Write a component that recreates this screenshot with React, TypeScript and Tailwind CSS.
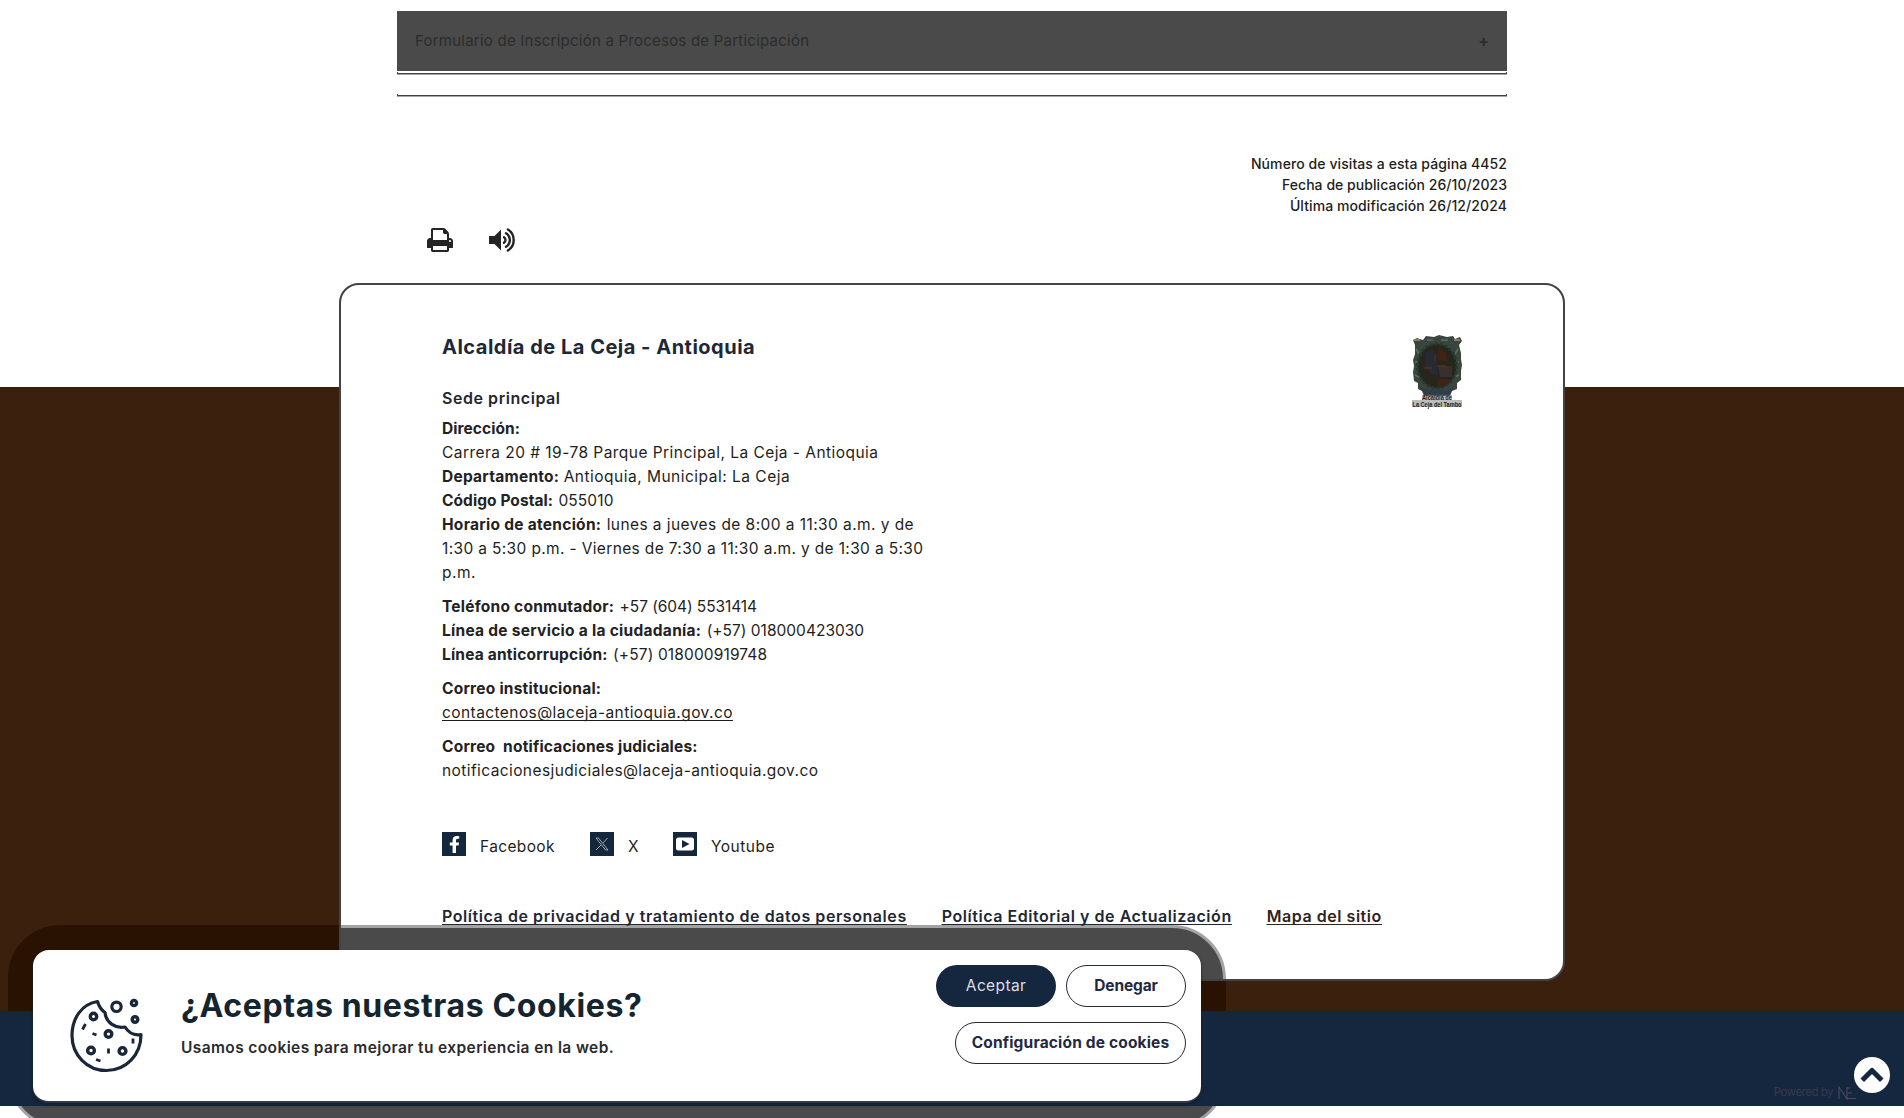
import type { ReactNode } from "react";
import { FaFacebookF } from "react-icons/fa";

const B = ({ c, children }: { c: string; children: ReactNode }) => (
  <b className={`font-bold text-[#222224] ${c}`}>{children}</b>
);

const PrintIcon = () => (
  <svg className="w-[26px] h-6" viewBox="0 0 1664 1536" preserveAspectRatio="none" fill="#242426">
    <path d="M384 1408h896v-256h-896v256zM384 768h896v-384h-160q-40 0-68-28t-28-68v-160h-640v640zM1536 832q0-26-19-45t-45-19-45 19-19 45 19 45 45 19 45-19 19-45zM1664 832v416q0 13-9.5 22.5t-22.5 9.5h-224v160q0 40-28 68t-68 28h-960q-40 0-68-28t-28-68v-160h-224q-13 0-22.5-9.5t-9.5-22.5v-416q0-79 56.5-135.5t135.5-56.5h64v-544q0-40 28-68t68-28h672q40 0 88 20t76 48l152 152q28 28 48 76t20 88v256h64q79 0 135.5 56.5t56.5 135.5z" />
  </svg>
);

const VolumeIcon = () => (
  <svg className="w-7 h-6 overflow-visible" viewBox="0 0 28 24" fill="none" stroke="#242426" strokeWidth="2.4" strokeLinecap="round">
    <path d="M0 8h5.500L12 1.500v21L5.500 16H0z" fill="#242426" stroke="none" />
    <path d="M15 9.200a3.400 3.400 0 0 1 0 5.600" />
    <path d="M17 5.200a8 8 0 0 1 0 13.600" />
    <path d="M18.900 1.500a12.400 12.400 0 0 1 0 21" />
  </svg>
);

const CookieIcon = () => (
  <svg className="w-[74px] h-[74px] shrink-0 overflow-visible" viewBox="0 0 74 74" fill="none" stroke="#1a2738" strokeWidth="3.200">
    <path d="M27.500 2.500C12 5 2 19 2 36.500 2 56 17 71.500 36.500 71.500S71 56 71 35.500c-6 1-12-1-16-7.500-9 2-19-4-20-14.500-3-2-6-6-7.500-11z" strokeLinejoin="round" />
    <circle cx="46.500" cy="7.800" r="4.700" strokeWidth="3.200" />
    <g strokeWidth="3.400">
      <circle cx="64" cy="4" r="2.600" />
      <circle cx="65" cy="20.500" r="2.800" />
      <circle cx="23.500" cy="17.500" r="3.200" />
      <circle cx="38.500" cy="35" r="3.300" />
      <circle cx="21" cy="51.500" r="3.400" />
      <circle cx="52.500" cy="52" r="3.400" />
      <path d="M15.500 25l-3 5.500M22.500 34.500l4 1.500M63 39.500v5M38.500 49.500v5M26 60.500l4.500 1.500" strokeWidth="2.800" />
    </g>
  </svg>
);

/* Municipal coat of arms with its two-line caption */
const Shield = () => (
  <svg className="w-[50px] h-[74px] overflow-visible" viewBox="0 0 50 74">
    <path d="M1 5l4-2 6 2 3-4 8 1 5-2 8 2 6-1 2 3 5-2 2 4-3 4 2 8v6l1 6-1 6v9l-4 3v6l-5 2-2 5H12l-2-5-4-2v-6l-4-2-1-9 1-6-1-6 2-6V10z" fill="#3b4540" />
    <path d="M2 5h6M42 5h6" stroke="#8c7a5c" strokeWidth="2" />
    <path d="M4 14l3 5M46 14l-3 5M3 27h4M47 27h-4M3 40l4 2M47 40l-4 2M15 5h6M29 5h7" stroke="#5d6b5a" strokeWidth="1.500" />
    <ellipse cx="25" cy="31" rx="19.500" ry="22" fill="#1f2920" stroke="#28382c" strokeWidth="3" strokeDasharray="3 2" />
    <ellipse cx="25" cy="31" rx="17" ry="20" fill="#27251c" />
    <path d="M13 18l8-4 4 7v20l-6-2-6-8z" fill="#252a33" />
    <path d="M26 13l8 5 2 9-10-2zM26 44h11v4l-7 4-5-2z" fill="#3f2316" />
    <path d="M26 31h14v11H28z" fill="#38302c" />
    <path d="M12 33h8M25 31h9M23 20v6" stroke="#593019" strokeWidth="1.300" />
    <path d="M8 53l9 2 8-1 9 2 8-3-5 6H13z" fill="#303b4c" />
    <path d="M10 60h30v5H10zM0 65h50v7H0z" fill="#77797a" opacity=".5" />
    <text x="25" y="65" textAnchor="middle" textLength="30" lengthAdjust="spacingAndGlyphs" fontSize="6.500" fontWeight="700" fill="#232323" fontFamily="Liberation Sans, sans-serif">Alcaldía de</text>
    <text x="25" y="71.500" textAnchor="middle" textLength="49" lengthAdjust="spacingAndGlyphs" fontSize="7" fontWeight="700" fill="#1e1e1e" fontFamily="Liberation Sans, sans-serif">La Ceja del Tambo</text>
  </svg>
);

export default function App() {
  return (
    <div className="relative h-[1118px] overflow-hidden bg-white text-[15.5px] text-[#1e1e20] font-['Inter','Liberation_Sans',sans-serif]">
      <main className="mx-auto h-[387px] w-[1110px] pt-[11px]">
        <div className="flex h-[60px] items-center justify-between bg-[#4a4a4a] px-[18px] text-[15px] text-[#2c2c2c]">
          <span className="tracking-[0.231px]">Formulario de Inscripción a Procesos de Participación</span>
          <span className="-mt-px text-base font-bold">+</span>
        </div>
        <div className="mt-px h-[2px] border-x border-b border-[#414143] shadow-[0_1px_0_#a8a8a8]" />
        <div className="mt-[20px] h-[2px] border-x border-b border-[#414143] shadow-[0_1px_0_#a8a8a8]" />
        <div className="mt-[57px] text-right text-sm font-medium leading-[21px]">
          <p className="tracking-[0.086px]">Número de visitas a esta página 4452</p>
          <p className="tracking-[0.045px]">Fecha de publicación 26/10/2023</p>
          <p className="tracking-[0.092px]">Última modificación 26/12/2024</p>
        </div>
        <div className="mt-[12px] ml-[30px] flex gap-[36px]">
          <PrintIcon />
          <VolumeIcon />
        </div>
      </main>

      <footer>
        <section className="relative h-[624px] bg-[#3a200d]">
          <div className="absolute inset-0 overflow-hidden">
            <div className="absolute top-[538px] left-2 h-[203px] w-[1218px] rounded-[52px] bg-[#2a1202]" />
          </div>
          <div className="relative mx-auto h-[698px] w-[1226px] -translate-y-[104px] overflow-hidden rounded-[20px] border-2 border-[#444245] bg-white pt-[48px] pl-[101px]">
            <div className="absolute top-[640px] -left-[333px] h-[203px] w-[1218px] rounded-[54px] border-[3px] border-[#a3a3a3] bg-[#4a4a4a]" />
            <div className="flex justify-between pr-[101px]">
              <div className="w-[500px]">
                <h2 className="text-xl font-bold leading-[28px] tracking-[0.5px] text-[#1c2836]">Alcaldía de La Ceja - Antioquia</h2>
                <h3 className="mt-[25px] text-base font-semibold leading-6 tracking-[0.551px] text-[#1f2630]">Sede principal</h3>
                <div className="mt-[7px] flex flex-col gap-[10px] whitespace-nowrap leading-6">
                  <div>
                    <p><B c="tracking-[0.074px]">Dirección:</B></p>
                    <p className="tracking-[0.458px]">Carrera 20 # 19-78 Parque Principal, La Ceja - Antioquia</p>
                    <p><B c="tracking-[0.254px]">Departamento:</B> <span className="tracking-[0.494px]">Antioquia, Municipal: La Ceja</span></p>
                    <p><B c="tracking-[0.066px]">Código Postal:</B> <span className="ml-px tracking-[0.103px]">055010</span></p>
                    <p><B c="tracking-[0.278px]">Horario de atención:</B> <span className="ml-px tracking-[0.43px]">lunes a jueves de 8:00 a 11:30 a.m. y de</span></p>
                    <p className="tracking-[0.353px]">1:30 a 5:30 p.m. - Viernes de 7:30 a 11:30 a.m. y de 1:30 a 5:30</p>
                    <p className="tracking-[0.5px]">p.m.</p>
                  </div>
                  <div>
                    <p><B c="tracking-[0.234px]">Teléfono conmutador:</B> <span className="ml-px tracking-[-0.071px]">+57 (604) 5531414</span></p>
                    <p><B c="tracking-[0.276px]">Línea de servicio a la ciudadanía:</B> <span className="ml-px tracking-[0.012px]">(+57) 018000423030</span></p>
                    <p><B c="tracking-[0.194px]">Línea anticorrupción:</B> <span className="ml-px tracking-[0.128px]">(+57) 018000919748</span></p>
                  </div>
                  <div>
                    <p><B c="tracking-[0.234px]">Correo institucional:</B></p>
                    <p><a className="tracking-[0.42px] underline underline-offset-2 decoration-1 [text-decoration-skip-ink:none]">contactenos@laceja-antioquia.gov.co</a></p>
                  </div>
                  <div>
                    <p><B c="tracking-[0.206px]">Correo{"\u00a0"} notificaciones judiciales:</B></p>
                    <p className="tracking-[0.408px]">notificacionesjudiciales@laceja-antioquia.gov.co</p>
                  </div>
                </div>
              </div>
              <div className="mt-[2px]"><Shield /></div>
            </div>

            <div className="mt-[49px] flex h-6 gap-[35px] leading-[29px]">
              <div className="flex gap-[14px]">
                <span className="flex size-6 items-center justify-center bg-[#15273d]"><FaFacebookF className="h-[17px] w-[11px] text-white" preserveAspectRatio="none" /></span>
                <span className="w-[75px] tracking-[0.364px]">Facebook</span>
              </div>
              <div className="flex gap-[14px]">
                <span className="flex size-6 items-center justify-center bg-[#15273d]">
                  <svg className="size-[14px]" viewBox="0 0 14 14" fill="none" stroke="#a9b1bd" strokeWidth="0.9"><path d="M1 1h2.500l9.500 12h-2.500zM12.500 1L8 6M6 8l-5 5" /></svg>
                </span>
                <span className="w-[10px]">X</span>
              </div>
              <div className="flex gap-[14px]">
                <span className="flex size-6 items-center justify-center bg-[#15273d]">
                  <svg className="h-[14px] w-[18px]" viewBox="0 0 18 14"><rect y="0.500" width="18" height="13" rx="2.500" fill="#fff" /><path d="M6 3l7.500 4L6 11z" fill="#15273d" /></svg>
                </span>
                <span className="tracking-[0.491px]">Youtube</span>
              </div>
            </div>

            <div className="relative mt-[48px] flex gap-[35px] text-base font-semibold leading-6 underline underline-offset-2 decoration-1 [text-decoration-skip-ink:none]">
              <a className="tracking-[0.565px] text-[#1f2733]">Política de privacidad y tratamiento de datos personales</a>
              <a className="tracking-[0.54px] text-[#1c2733]">Política Editorial y de Actualización</a>
              <a className="tracking-[0.54px] text-[#33231a]">Mapa del sitio</a>
            </div>
          </div>
        </section>

        <section className="relative h-[95px] bg-[#14273f]">
          <div className="flex h-full items-end justify-end gap-[5px] pr-[48px] pb-[6px] text-[#3a384c]">
            <span className="text-[11.5px] leading-4 tracking-[-0.5px]">Powered by</span>
            <svg className="h-3.5 w-[18px]" viewBox="0 0 18 14" fill="none" stroke="#4a4a5b" strokeWidth="1.100"><path d="M1 13V1l8 12V1M12 2h-3M10 7h4M9 12.500h9" /></svg>
          </div>
          <button className="absolute top-[46px] right-[14px] flex size-[36px] items-center justify-center rounded-full bg-white" aria-label="Subir">
            <svg className="h-4 w-6" viewBox="0 0 24 16" fill="none" stroke="#14273f" strokeWidth="5" strokeLinecap="square" strokeLinejoin="round"><path d="M4 11.500l8-8 8 8" /></svg>
          </button>
        </section>
        <div className="relative h-3 overflow-hidden">
          <div className="absolute -top-[181px] left-2 h-[203px] w-[1218px] rounded-[52px] border-[3px] border-[#a3a3a3] bg-[#4a4a4a]" />
        </div>
      </footer>

      <aside className="absolute top-[950px] left-[33px] flex h-[153px] w-[1168px] rounded-[16px] border-b-2 border-[#2c3a49] bg-white pt-[15px] pr-[15px] pl-[37px] shadow-[0_2px_3px_#14202e]">
        <div className="mt-[34px]"><CookieIcon /></div>
        <div className="ml-[37px] mt-[21px] flex-1 whitespace-nowrap">
          <h2 className="text-[32px] font-bold leading-[40px] tracking-[0.62px] text-[#14252f]">¿Aceptas nuestras Cookies?</h2>
          <p className="mt-[10px] font-semibold leading-6 tracking-[0.39px] text-[#2a2a2c]">Usamos cookies para mejorar tu experiencia en la web.</p>
        </div>
        <div className="flex w-[250px] flex-wrap content-start justify-end gap-x-[10px] gap-y-[15px] text-[#1f2940]">
          <button className="h-[42px] w-[120px] rounded-[21px] bg-[#14273f] tracking-[0.373px] text-[#dfdfe2]">Aceptar</button>
          <button className="h-[42px] w-[120px] rounded-[21px] border-[1.500px] border-[#252a35] font-bold tracking-[-0.152px]">Denegar</button>
          <button className="h-[42px] w-[231px] rounded-[21px] border-[1.500px] border-[#252a35] font-bold tracking-[0.164px]">Configuración de cookies</button>
        </div>
      </aside>
    </div>
  );
}
